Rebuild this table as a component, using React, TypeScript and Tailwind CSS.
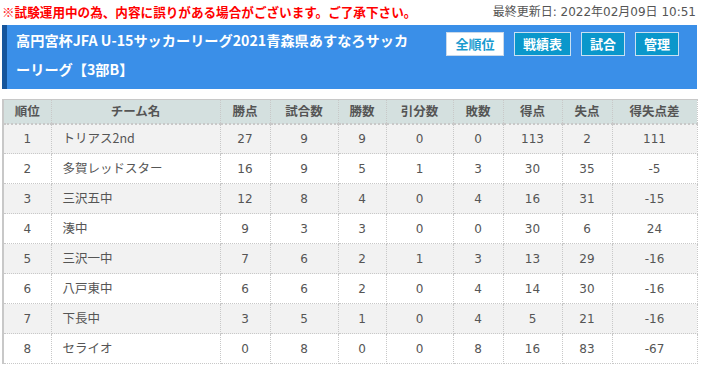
import React from 'react';

const rows = [
  { rank: 1, team: 'トリアス2nd', pts: 27, played: 9, win: 9, draw: 0, lose: 0, gf: 113, ga: 2, diff: 111 },
  { rank: 2, team: '多賀レッドスター', pts: 16, played: 9, win: 5, draw: 1, lose: 3, gf: 30, ga: 35, diff: -5 },
  { rank: 3, team: '三沢五中', pts: 12, played: 8, win: 4, draw: 0, lose: 4, gf: 16, ga: 31, diff: -15 },
  { rank: 4, team: '湊中', pts: 9, played: 3, win: 3, draw: 0, lose: 0, gf: 30, ga: 6, diff: 24 },
  { rank: 5, team: '三沢一中', pts: 7, played: 6, win: 2, draw: 1, lose: 3, gf: 13, ga: 29, diff: -16 },
  { rank: 6, team: '八戸東中', pts: 6, played: 6, win: 2, draw: 0, lose: 4, gf: 14, ga: 30, diff: -16 },
  { rank: 7, team: '下長中', pts: 3, played: 5, win: 1, draw: 0, lose: 4, gf: 5, ga: 21, diff: -16 },
  { rank: 8, team: 'セライオ', pts: 0, played: 8, win: 0, draw: 0, lose: 8, gf: 16, ga: 83, diff: -67 },
];

const headers = [
  { label: '順位', w: 'w-[48px]' },
  { label: 'チーム名', w: 'w-[169px]' },
  { label: '勝点', w: 'w-[50px]' },
  { label: '試合数', w: 'w-[68px]' },
  { label: '勝数', w: 'w-[48px]' },
  { label: '引分数', w: 'w-[67px]' },
  { label: '敗数', w: 'w-[50px]' },
  { label: '得点', w: 'w-[59px]' },
  { label: '失点', w: 'w-[50px]' },
  { label: '得失点差', w: 'w-[85px]' },
];

const font = "font-['DejaVu_Sans','Noto_Sans_CJK_JP',sans-serif]";
const cell = 'text-center border border-dotted border-[#c8c8c8]';

const App: React.FC = () => {
  return (
    <div className={`w-[701px] h-[366px] overflow-hidden bg-white pl-[2px] pr-[4px] ${font}`}>
      {/* notice + updated date */}
      <div className="flex justify-between items-center h-[25px] pb-[1px]">
        <span className="text-[12.6px] font-bold text-[#ff0000] font-['Noto_Sans_CJK_JP',sans-serif]">
          ※試験運用中の為、内容に誤りがある場合がございます。ご了承下さい。
        </span>
        <span className="text-[12px] text-[#555] pr-[1px]">最終更新日: 2022年02月09日 10:51</span>
      </div>

      {/* title bar */}
      <div className="flex h-[64px] bg-[#3a8fe8] border-l-[5px] border-[#15559c]">
        <h1 className="w-[414px] pl-[9px] pt-[1px] text-[14.2px] leading-[29px] font-bold text-white font-['Noto_Sans_CJK_JP',sans-serif]">
          高円宮杯JFA U-15サッカーリーグ2021青森県あすなろサッカーリーグ【3部B】
        </h1>
        <div className="ml-auto flex items-start gap-[10px] pt-[7px] pr-[18px] font-['Noto_Sans_CJK_JP',sans-serif]">
          <button className="h-[24px] w-[58px] bg-white border border-[#c9d9ea] text-[#1a9bd0] text-[13px] font-bold">全順位</button>
          <button className="h-[24px] w-[57px] bg-[#0a97cb] border border-[#c9e0f2] text-white text-[13px] font-bold">戦績表</button>
          <button className="h-[24px] w-[44px] bg-[#0a97cb] border border-[#c9e0f2] text-white text-[13px] font-bold">試合</button>
          <button className="h-[24px] w-[44px] bg-[#0a97cb] border border-[#c9e0f2] text-white text-[13px] font-bold">管理</button>
        </div>
      </div>

      {/* standings table */}
      <table className="mt-[10px] w-[695px] table-fixed border-collapse border-t border-l-2 border-t-[#c8c8c8] border-l-[#c8c8c8] border-solid text-[12px] text-[#555]">
        <thead>
          <tr className="h-[24px] bg-[#d4e0df]">
            {headers.map((h) => (
              <th key={h.label} className={`${h.w} border-r border-b-2 border-r-[#c8c8c8] border-b-[#c8c8c8] border-dotted font-bold text-[12.5px] text-[#555] font-['Noto_Sans_CJK_JP',sans-serif]`}>
                {h.label}
              </th>
            ))}
          </tr>
        </thead>
        <tbody>
          {rows.map((r, i) => (
            <tr key={r.rank} className={`h-[30px] ${i % 2 === 0 ? 'bg-[#f2f2f2]' : 'bg-white'}`}>
              <td className={cell}>{r.rank}</td>
              <td className="pl-[11px] border border-dotted border-[#c8c8c8] font-['Noto_Sans_CJK_JP',sans-serif] text-[12.5px]">{r.team}</td>
              <td className={cell}>{r.pts}</td>
              <td className={cell}>{r.played}</td>
              <td className={cell}>{r.win}</td>
              <td className={cell}>{r.draw}</td>
              <td className={cell}>{r.lose}</td>
              <td className={cell}>{r.gf}</td>
              <td className={cell}>{r.ga}</td>
              <td className={cell}>{r.diff}</td>
            </tr>
          ))}
        </tbody>
      </table>
    </div>
  );
};

export default App;
